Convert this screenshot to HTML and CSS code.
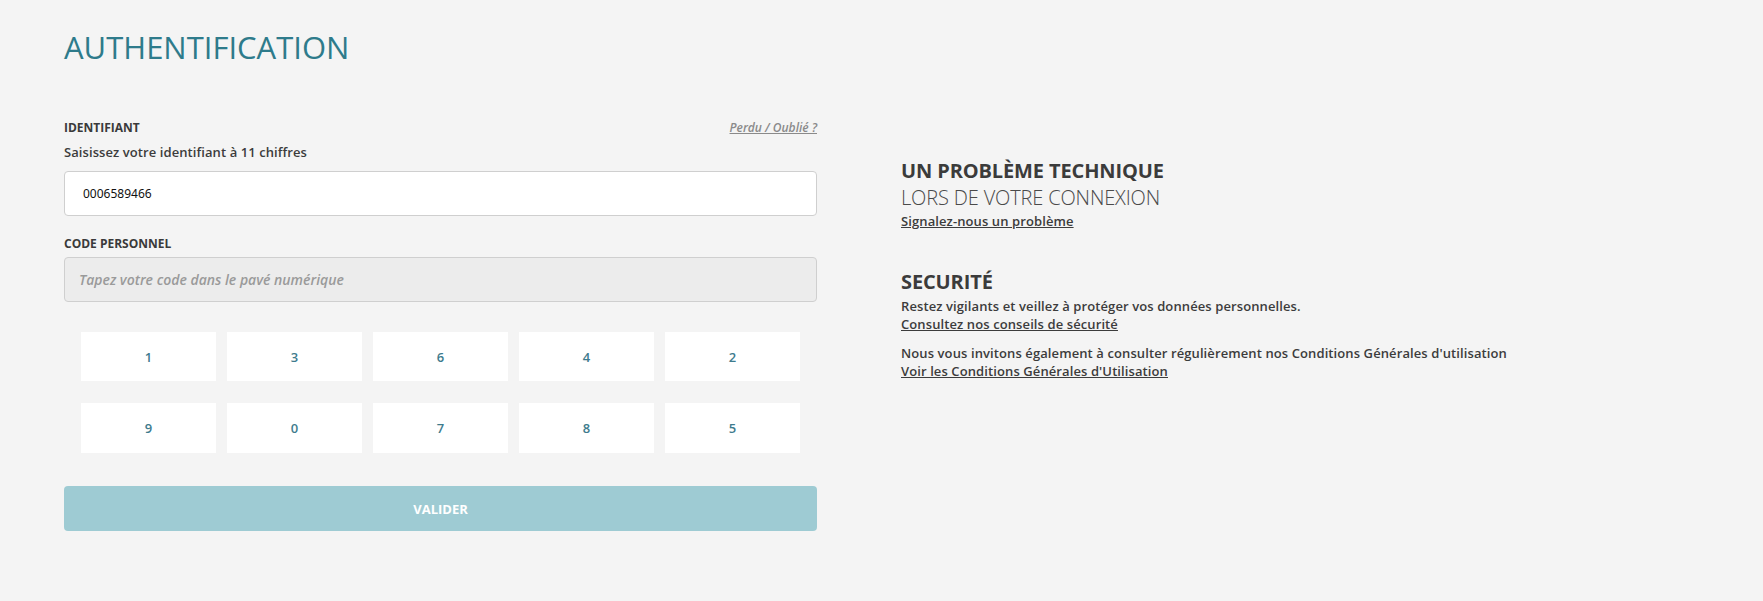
FILE: index.html
```html
<!DOCTYPE html>
<html lang="fr">
<head>
<meta charset="utf-8">
<title>Authentification</title>
<link rel="stylesheet" href="styles.css">
</head>
<body>
<main class="page">
  <h1 class="title">AUTHENTIFICATION</h1>
  <div class="columns">
    <form class="login">
      <div class="label-row">
        <span class="label">IDENTIFIANT</span>
        <a class="forgot" href="#">Perdu / Oublié ?</a>
      </div>
      <p class="hint">Saisissez votre identifiant à 11 chiffres</p>
      <div class="field field-id">0006589466</div>
      <div class="label-row label-code">
        <span class="label">CODE PERSONNEL</span>
      </div>
      <div class="field field-code">Tapez votre code dans le pavé numérique</div>
      <div class="keypad">
        <button type="button" class="key">1</button>
        <button type="button" class="key">3</button>
        <button type="button" class="key">6</button>
        <button type="button" class="key">4</button>
        <button type="button" class="key">2</button>
        <button type="button" class="key">9</button>
        <button type="button" class="key">0</button>
        <button type="button" class="key">7</button>
        <button type="button" class="key">8</button>
        <button type="button" class="key">5</button>
      </div>
      <button type="button" class="submit">VALIDER</button>
    </form>
    <aside class="info">
      <section class="block">
        <h2 class="heading">UN PROBLÈME TECHNIQUE</h2>
        <p class="subheading">LORS DE VOTRE CONNEXION</p>
        <a class="link" href="#">Signalez-nous un problème</a>
      </section>
      <section class="block block-sec">
        <h2 class="heading">SECURITÉ</h2>
        <p class="text">Restez vigilants et veillez à protéger vos données personnelles.</p>
        <a class="link" href="#">Consultez nos conseils de sécurité</a>
        <p class="text text-gap">Nous vous invitons également à consulter régulièrement nos Conditions Générales d'utilisation</p>
        <a class="link" href="#">Voir les Conditions Générales d'Utilisation</a>
      </section>
    </aside>
  </div>
</main>
</body>
</html>
```

FILE: styles.css
```css
* { box-sizing: border-box; }
html, body { margin: 0; padding: 0; }
body {
  background: #f4f4f4;
  font-family: "Open Sans", "Noto Sans", sans-serif;
  color: #3c3c3c;
}
.page {
  padding: 27px 0 0 64px;
}
.title {
  margin: 0;
  font-size: 31px;
  font-weight: 400;
  line-height: 41px;
  color: #2e7b8b;
}
.columns {
  display: flex;
  gap: 84px;
  margin-top: 51px;
}
.login {
  width: 753px;
  display: flex;
  flex-direction: column;
}
.label-row {
  display: flex;
  justify-content: space-between;
  align-items: center;
  height: 16px;
}
.label {
  font-size: 12px;
  font-weight: 700;
  color: #3a3a3a;
}
.forgot {
  font-size: 12px;
  font-style: italic;
  font-weight: 600;
  color: #8a8a8a;
  text-decoration: underline;
}
.hint {
  margin: 8px 0 0;
  font-size: 13px;
  font-weight: 600;
  line-height: 18px;
  letter-spacing: 0.08px;
  color: #3c3c3c;
}
.field {
  height: 45px;
  border: 1px solid #cfcfcf;
  border-radius: 4px;
  display: flex;
  align-items: center;
}
.field-id {
  margin-top: 10px;
  background: #fff;
  padding-left: 18px;
  font-family: "Noto Sans", "Open Sans", sans-serif;
  font-size: 12px;
  color: #111;
}
.label-code {
  margin-top: 19px;
}
.field-code {
  margin-top: 6px;
  background: #ececec;
  padding-left: 14px;
  font-size: 14px;
  font-style: italic;
  font-weight: 600;
  color: #9a9a9a;
}
.keypad {
  margin-top: 30px;
  padding: 0 17px;
  display: grid;
  grid-template-columns: repeat(5, 1fr);
  column-gap: 11px;
  row-gap: 22px;
}
.key {
  height: 49px;
  border: 0;
  background: #fff;
  font-family: "Open Sans", sans-serif;
  font-size: 13px;
  font-weight: 600;
  color: #3e7b8d;
  padding: 0;
}
.key:nth-child(n+6) { height: 50px; }
.submit {
  margin-top: 33px;
  height: 45px;
  border: 0;
  border-radius: 4px;
  background: #9ecbd3;
  color: #fff;
  font-family: "Open Sans", sans-serif;
  font-size: 13px;
  font-weight: 700;
}
.info {
  display: flex;
  flex-direction: column;
  padding-top: 38px;
}
.block {
  display: flex;
  flex-direction: column;
  align-items: flex-start;
}
.block-sec { margin-top: 38px; }
.heading {
  margin: 0;
  font-size: 20px;
  font-weight: 700;
  line-height: 27px;
  letter-spacing: -0.12px;
  color: #3b3b3b;
}
.subheading {
  margin: 0;
  font-size: 20px;
  font-weight: 300;
  line-height: 27px;
  letter-spacing: -0.15px;
  color: #4a4a4a;
}
.text {
  margin: 2px 0 0;
  font-size: 13px;
  font-weight: 600;
  line-height: 18px;
  letter-spacing: 0.1px;
  color: #3c3c3c;
}
.text-gap { margin-top: 11px; }
.link {
  margin-top: 1px;
  font-size: 13px;
  font-weight: 600;
  line-height: 18px;
  letter-spacing: 0.1px;
  color: #3c3c3c;
  text-decoration: underline;
}
.block-sec .link { margin-top: 0; }
```
